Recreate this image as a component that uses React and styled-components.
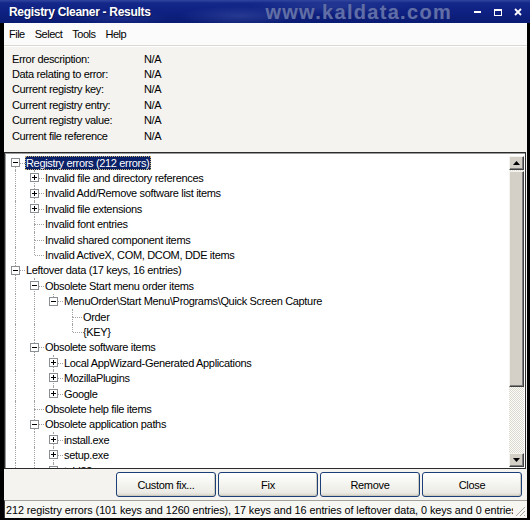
import styled, { createGlobalStyle } from "styled-components";

const GlobalStyle = createGlobalStyle`
  body {
    margin: 0;
    background: #000;
    font-family: "Liberation Sans", Arial, sans-serif;
  }
`;

// `more` marks a node whose list goes on past the scrolled-off bottom of the view
const tree = [
  {
    label: "Registry errors (212 errors)",
    state: "open",
    selected: true,
    kids: [
      { label: "Invalid file and directory references", state: "closed" },
      { label: "Invalid Add/Remove software list items", state: "closed" },
      { label: "Invalid file extensions", state: "closed" },
      { label: "Invalid font entries" },
      { label: "Invalid shared component items" },
      { label: "Invalid ActiveX, COM, DCOM, DDE items" },
    ],
  },
  {
    label: "Leftover data (17 keys, 16 entries)",
    state: "open",
    more: true,
    kids: [
      {
        label: "Obsolete Start menu order items",
        state: "open",
        kids: [
          {
            label: "MenuOrder\\Start Menu\\Programs\\Quick Screen Capture",
            state: "open",
            kids: [{ label: "Order" }, { label: "{KEY}" }],
          },
        ],
      },
      {
        label: "Obsolete software items",
        state: "open",
        kids: [
          { label: "Local AppWizard-Generated Applications", state: "closed" },
          { label: "MozillaPlugins", state: "closed" },
          { label: "Google", state: "closed" },
        ],
      },
      { label: "Obsolete help file items" },
      {
        label: "Obsolete application paths",
        state: "open",
        more: true,
        kids: [
          { label: "install.exe", state: "closed" },
          { label: "setup.exe", state: "closed" },
          { label: "tabl32.exe", state: "closed", more: true },
        ],
      },
    ],
  },
];

function flatten(nodes, guides = [], out = []) {
  nodes.forEach((node, i) => {
    const last = i === nodes.length - 1 && !node.more;
    out.push({
      ...node,
      guides,
      last,
      first: guides.length === 0 && i === 0,
    });
    if (node.state === "open" && node.kids) {
      flatten(node.kids, [...guides, !last], out);
    }
  });
  return out;
}

const info = [
  "Error description:",
  "Data relating to error:",
  "Current registry key:",
  "Current registry entry:",
  "Current registry value:",
  "Current file reference",
];

const Window = styled.div`
  width: 530px;
  height: 520px;
  background: #000;
  display: flex;
  flex-direction: column;
  overflow: hidden;
`;

const TitleBar = styled.div`
  height: 23px;
  flex-shrink: 0;
  display: flex;
  align-items: center;
  padding: 0 8px 0 9px;
  background:
    radial-gradient(ellipse 60px 10px at 240px 16px, rgba(70, 90, 170, 0.45), transparent),
    radial-gradient(ellipse 80px 9px at 330px 6px, rgba(60, 80, 160, 0.4), transparent),
    radial-gradient(ellipse 50px 8px at 120px 18px, rgba(50, 70, 160, 0.35), transparent),
    linear-gradient(180deg, #31459f 0, #14288a 3px, #0e2081 55%, #0a1b73 100%);
`;

const Title = styled.span`
  color: #fff;
  font-weight: bold;
  font-size: 12px;
  letter-spacing: -0.3px;
  text-shadow: 1px 1px 0 #0a1550;
`;

const Watermark = styled.span`
  margin-left: auto;
  margin-right: 22px;
  color: #5f6ea8;
  font-weight: bold;
  font-size: 20px;
  letter-spacing: 1.3px;
  line-height: 1;
  padding-top: 1px;
  text-shadow: 0 0 1px #2a3370;
`;

const Controls = styled.div`
  display: flex;
  align-items: center;
  gap: 12px;
  svg {
    display: block;
  }
`;

const Body = styled.div`
  flex: 1;
  min-height: 0;
  margin: 0 3px 2px 4px;
  background: #f4f3ef;
  display: flex;
  flex-direction: column;
`;

const MenuBar = styled.div`
  height: 22px;
  flex-shrink: 0;
  display: flex;
  align-items: center;
  gap: 10px;
  padding-left: 5px;
  background: #fbfbfb;
  border-bottom: 1px solid #d9d8d3;
  font-size: 11px;
  letter-spacing: -0.5px;
  color: #000;
`;

const MenuItem = styled.span`
  padding: 0;
`;

const Info = styled.div`
  height: 106px;
  flex-shrink: 0;
  box-sizing: border-box;
  border-top: 1px solid #fff;
  padding: 4px 0 0 8px;
  display: grid;
  grid-template-columns: 132px auto;
  grid-auto-rows: 15.4px;
  align-content: start;
  align-items: center;
  font-size: 11px;
  letter-spacing: -0.35px;
  color: #000;
`;

const TreeBox = styled.div`
  height: 317px;
  flex-shrink: 0;
  box-sizing: border-box;
  margin-right: 1px;
  border: 1px solid #2b2b2b;
  box-shadow: inset 1px 1px 0 #9a9a9a;
  background: #fff;
  display: flex;
`;

const TreeList = styled.div`
  flex: 1;
  overflow: hidden;
  padding: 2px 0 0 1px;
  font-size: 11px;
  letter-spacing: -0.33px;
  color: #000;
`;

const Row = styled.div`
  height: 15.4px;
  display: flex;
  white-space: nowrap;
`;

const Guide = styled.div`
  width: 19px;
  flex-shrink: 0;
  position: relative;
  &::before {
    content: "";
    display: ${(p) => (p.$line ? "block" : "none")};
    position: absolute;
    left: 9px;
    top: 0;
    bottom: 0;
    border-left: 1px dotted #a3a3a3;
  }
`;

const Connector = styled.div`
  width: 19px;
  flex-shrink: 0;
  position: relative;
  &::before {
    content: "";
    display: ${(p) => (p.$top ? "block" : "none")};
    position: absolute;
    left: 9px;
    top: 0;
    height: 50%;
    border-left: 1px dotted #a3a3a3;
  }
  &::after {
    content: "";
    display: ${(p) => (p.$bottom ? "block" : "none")};
    position: absolute;
    left: 9px;
    top: 50%;
    bottom: 0;
    border-left: 1px dotted #a3a3a3;
  }
`;

const Elbow = styled.span`
  position: absolute;
  left: 10px;
  right: 0;
  top: 50%;
  border-top: 1px dotted #a3a3a3;
`;

const Expander = styled.svg`
  position: absolute;
  left: 5px;
  top: 3px;
  z-index: 1;
`;

const Label = styled.span`
  align-self: center;
  line-height: 14px;
  padding: 0 2px 0 1px;
  background: ${(p) => (p.$selected ? "#0b2168" : "transparent")};
  color: ${(p) => (p.$selected ? "#fff" : "#000")};
  outline: ${(p) => (p.$selected ? "1px dotted #c8b070" : "none")};
  outline-offset: -1px;
`;

const Scrollbar = styled.div`
  width: 15px;
  flex-shrink: 0;
  margin: 3px 1px 1px 0;
  display: flex;
  flex-direction: column;
  background-color: #f0efea;
  background-image: conic-gradient(#dcd9d0 25%, #fbfbf8 0 50%, #dcd9d0 0 75%, #fbfbf8 0);
  background-size: 2px 2px;
`;

const raised = `
  background: #d4d0c8;
  border: 1px solid;
  border-color: #f4f3ee #404040 #404040 #f4f3ee;
  box-shadow: inset -1px -1px 0 #808080;
  box-sizing: border-box;
`;

const ArrowButton = styled.div`
  ${raised}
  height: 14px;
  flex-shrink: 0;
  display: flex;
  align-items: center;
  justify-content: center;
  margin-top: ${(p) => (p.$down ? "auto" : "0")};
`;

const Thumb = styled.div`
  ${raised}
  height: 216px;
  margin-top: 1px;
  flex-shrink: 0;
`;

const ButtonRow = styled.div`
  height: 25px;
  flex-shrink: 0;
  margin-top: 3px;
  display: flex;
  justify-content: flex-end;
  gap: 2px;
  padding-right: 5px;
`;

const Button = styled.button`
  width: 100px;
  height: 25px;
  border: 1px solid #1c3f78;
  border-radius: 3px;
  background: linear-gradient(180deg, #ffffff 0%, #f6f6f2 40%, #ecebe5 85%, #d8d4c8 100%);
  box-shadow: inset -1px -1px 0 #cdcac0;
  font-family: "Liberation Sans", Arial, sans-serif;
  font-size: 11px;
  letter-spacing: -0.3px;
  color: #000;
  padding: 0;
`;

const StatusBar = styled.div`
  height: 18px;
  flex-shrink: 0;
  margin-top: 3px;
  box-sizing: border-box;
  border-top: 1px solid #a2a19c;
  border-left: 1px solid #3a3a3a;
  background: #f6f6f3;
  display: flex;
  align-items: center;
  padding-left: 1px;
  color: #000;
`;

const StatusText = styled.span`
  flex: 1;
  min-width: 0;
  overflow: hidden;
  white-space: nowrap;
  font-size: 10.8px;
  line-height: 14px;
  letter-spacing: -0.05px;
`;

const Grip = styled.svg`
  flex-shrink: 0;
  align-self: flex-end;
  margin: 0 1px 1px 1px;
`;

function Box({ open }) {
  return (
    <Expander width="9" height="9" viewBox="0 0 9 9" shapeRendering="crispEdges">
      <rect x="0.5" y="0.5" width="8" height="8" fill="#fff" stroke="#8a8f94" />
      <rect x="2" y="4" width="5" height="1" fill="#000" />
      {!open && <rect x="4" y="2" width="1" height="5" fill="#000" />}
    </Expander>
  );
}

function TreeRow({ item }) {
  const hasKids = item.state === "open" || item.state === "closed";
  return (
    <Row>
      {item.guides.map((line, i) => (
        <Guide key={i} $line={line} />
      ))}
      <Connector $top={!item.first} $bottom={!item.last}>
        <Elbow />
        {hasKids && <Box open={item.state === "open"} />}
      </Connector>
      <Label $selected={item.selected}>{item.label}</Label>
    </Row>
  );
}

export default function App() {
  const rows = flatten(tree);
  return (
    <>
      <GlobalStyle />
      <Window>
        <TitleBar>
          <Title>Registry Cleaner - Results</Title>
          <Watermark>www.kaldata.com</Watermark>
          <Controls>
            <svg width="8" height="8" viewBox="0 0 8 8" shapeRendering="crispEdges">
              <rect x="0" y="3" width="7" height="2" fill="#fff" />
            </svg>
            <svg width="8" height="8" viewBox="0 0 8 8" shapeRendering="crispEdges">
              <rect x="0.5" y="1.5" width="7" height="6" fill="none" stroke="#fff" />
              <rect x="0" y="1" width="8" height="2" fill="#fff" />
            </svg>
            <svg width="8" height="8" viewBox="0 0 8 8">
              <path d="M1 1 L7 7 M7 1 L1 7" stroke="#fff" strokeWidth="1.8" />
            </svg>
          </Controls>
        </TitleBar>
        <Body>
          <MenuBar>
            <MenuItem>File</MenuItem>
            <MenuItem>Select</MenuItem>
            <MenuItem>Tools</MenuItem>
            <MenuItem>Help</MenuItem>
          </MenuBar>
          <Info>
            {info.map((label) => [
              <span key={label}>{label}</span>,
              <span key={label + "-value"}>N/A</span>,
            ])}
          </Info>
          <TreeBox>
            <TreeList>
              {rows.map((item, i) => (
                <TreeRow key={i} item={item} />
              ))}
            </TreeList>
            <Scrollbar>
              <ArrowButton>
                <svg width="7" height="4" viewBox="0 0 7 4">
                  <path d="M3.5 0 L7 4 L0 4 Z" fill="#000" />
                </svg>
              </ArrowButton>
              <Thumb />
              <ArrowButton $down>
                <svg width="7" height="4" viewBox="0 0 7 4">
                  <path d="M0 0 L7 0 L3.5 4 Z" fill="#000" />
                </svg>
              </ArrowButton>
            </Scrollbar>
          </TreeBox>
          <ButtonRow>
            <Button>Custom fix...</Button>
            <Button>Fix</Button>
            <Button>Remove</Button>
            <Button>Close</Button>
          </ButtonRow>
          <StatusBar>
            <StatusText>
              212 registry errors (101 keys and 1260 entries), 17 keys and 16 entries of leftover data, 0 keys and 0 entries
            </StatusText>
            <Grip width="12" height="12" viewBox="0 0 12 12" shapeRendering="crispEdges">
              <path d="M11 2 L2 11 M11 6 L6 11 M11 10 L10 11" stroke="#a8a69e" strokeWidth="1" />
              <path d="M12 3 L3 12 M12 7 L7 12" stroke="#fff" strokeWidth="1" />
            </Grip>
          </StatusBar>
        </Body>
      </Window>
    </>
  );
}
